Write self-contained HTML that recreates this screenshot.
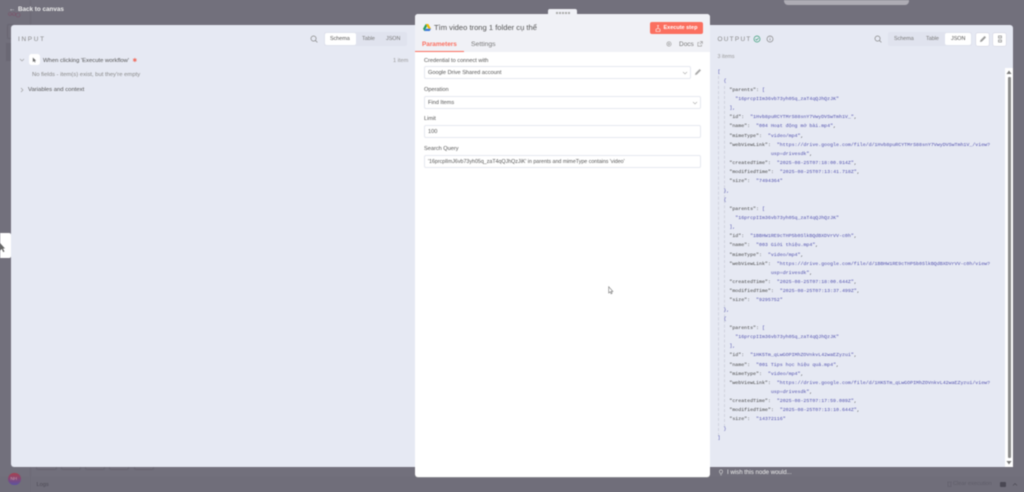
<!DOCTYPE html>
<html><head><meta charset="utf-8"><style>
html,body{margin:0;padding:0;width:1024px;height:492px;overflow:hidden;background:#72707c}
#r{position:relative;width:1024px;height:492px;overflow:hidden;filter:blur(.4px);font-family:"Liberation Sans","Noto Sans CJK SC",sans-serif}
#r div{position:absolute;white-space:nowrap}
.t{color:#555;font-size:5.9px;line-height:9px}
.f{background:#fff;border:.6px solid #e6e8ef;border-radius:2px;box-sizing:border-box;height:13.5px;left:424px;width:277px;font-size:5.6px;line-height:13px;color:#555;padding-left:3px}
#r .j{left:717.5px;font-family:"Liberation Mono","DejaVu Sans Mono",monospace;font-size:4.95px;line-height:9.15px;color:#444;white-space:pre}
.j b{font-weight:normal;color:#5050ad}
.g{background:#e0e3ee;border-radius:2px}
.b{background:#fff;border-radius:2px;box-shadow:0 0 0 .5px #ccd}
.o{top:466px;height:3px;border:.5px solid #686672;border-top:0;border-radius:0 0 2px 2px}
</style></head><body><div id="r">
<div style="left:0;top:477px;width:1024px;height:15px;background:#706e7a"></div>
<div style="left:30px;top:0;width:1px;height:492px;background:#6d6b77"></div>
<div style="left:784px;top:-4px;width:125px;height:9px;background:#aeacb4;border-radius:4px"></div>
<svg style="position:absolute;left:7px;top:10px" width="14" height="8" viewBox="0 0 14 8" fill="none" stroke="#7c5068" stroke-width=".6"><circle cx="3" cy="4" r="1.500"/><circle cx="7" cy="4" r="1.500"/><circle cx="11" cy="5" r="2"/></svg>
<div style="left:7px;top:24px;width:5px;height:13px;border:.5px solid #686672;border-radius:2px"></div>
<div style="left:6px;top:43px;width:6px;height:18px;background:#6a6874"></div>
<div class="o" style="left:36px;width:19px"></div>
<div class="o" style="left:61px;width:18px"></div>
<div class="o" style="left:85px;width:18px"></div>
<div class="o" style="left:109px;width:18px"></div>
<div class="o" style="left:134px;width:18px"></div>
<div style="left:9px;top:5px;color:#eee;font-size:6.400px;line-height:9px">←</div>
<div style="left:18px;top:5px;color:#eee;font-size:6.300px;font-weight:bold;line-height:9px">Back to canvas</div>

<div style="left:11px;top:25px;width:410px;height:441.500px;background:#e6e9f3;border-radius:3px"></div>
<div style="left:710px;top:25px;width:303px;height:441.500px;background:#e6e9f3;border-radius:0 3px 3px 0"></div>

<div style="left:18px;top:34.500px;color:#888;font-size:6.400px;letter-spacing:1.700px;line-height:9px">INPUT</div>
<svg style="position:absolute;left:310px;top:35px" width="8" height="8" viewBox="0 0 9 9" fill="none" stroke="#888" stroke-width=".8"><circle cx="4" cy="4" r="2.900"/><path d="M6 6l2.300 2.300"/></svg>
<div class="g" style="left:324px;top:32px;width:83px;height:14px"></div>
<div class="b" style="left:325px;top:33px;width:31px;height:12px;box-shadow:none"></div>
<div class="t" style="left:330px;top:34.500px;font-size:5.400px">Schema</div>
<div class="t" style="left:362px;top:34.500px;font-size:5.400px;color:#777">Table</div>
<div class="t" style="left:386px;top:34.500px;font-size:5.400px;color:#777">JSON</div>
<svg style="position:absolute;left:19px;top:57px" width="6" height="6" viewBox="0 0 6 6" fill="none" stroke="#999" stroke-width=".6"><path d="M1 2l2 2 2-2"/></svg>
<div style="left:29px;top:54px;width:10.500px;height:10.500px;background:#fff;border-radius:2.500px"></div>
<svg style="position:absolute;left:31.500px;top:56.500px" width="5" height="6" viewBox="0 0 6 7"><path d="M1 .5v5.500l1.400-1.300 1 1.800.8-.4-1-1.700h1.800z" fill="#666"/></svg>
<div class="t" style="left:43px;top:56.700px">When clicking 'Execute workflow'</div>
<div style="left:132.500px;top:56.500px;color:#f0695a;font-size:5.500px;line-height:8px">✱</div>
<div class="t" style="left:393px;top:56.700px;color:#999;font-size:5.600px">1 item</div>
<div class="t" style="left:32px;top:70.700px;color:#888">No fields - item(s) exist, but they're empty</div>
<svg style="position:absolute;left:19px;top:87px" width="6" height="6" viewBox="0 0 6 6" fill="none" stroke="#999" stroke-width=".6"><path d="M2 1l2 2-2 2"/></svg>
<div class="t" style="left:28px;top:86.200px">Variables and context</div>

<div style="left:0;top:233px;width:11px;height:25px;background:#fff;border-radius:0 2px 2px 0"></div>
<svg style="position:absolute;left:0;top:243px" width="6" height="11" viewBox="0 0 6 11"><path d="M0 0l5 5.500h-2l1.500 3-1.300.6L1.800 6 0 7.500z" fill="#666"/></svg>

<div style="left:548px;top:9px;width:29px;height:8px;background:#f0f1f6;border-radius:2px 2px 0 0"></div>
<div style="left:555.500px;top:12px;width:2px;height:3px;background:#aaa;box-shadow:3px 0 #aaa,6px 0 #aaa,9px 0 #aaa,12px 0 #aaa"></div>
<div style="left:414.700px;top:14px;width:295.300px;height:463px;background:#fff;border-radius:3px;box-shadow:0 .5px 0 #aaa"></div>
<div style="left:414.700px;top:14px;width:295.300px;height:37.500px;background:#f0f1f6;border-radius:3px 3px 0 0"></div>
<svg style="position:absolute;left:422.500px;top:23.500px" width="8" height="7.500" viewBox="0 0 8 7.500"><path d="M2.700 0h2.600L8 4.700H5.400z" fill="#f2b705"/><path d="M2.700 0L0 4.700l1.300 2.300L4 2.300z" fill="#2a9d5c"/><path d="M1.300 7h5.400L8 4.700H2.600z" fill="#3a78d8"/></svg>
<div style="left:434px;top:22px;color:#555;font-size:7.600px;line-height:11px">Tìm video trong 1 folder cụ thể</div>
<div style="left:649.500px;top:22px;width:53px;height:12px;background:#fb6f5f;border-radius:2px"></div>
<svg style="position:absolute;left:655px;top:24.500px" width="6" height="7" viewBox="0 0 6 7" fill="none" stroke="#fff" stroke-width=".6"><path d="M2 .5h2M3 .5v3M1 6.500h4V4.500a2 1 0 0 0-4 0z"/></svg>
<div style="left:663.500px;top:23.500px;color:#fff;font-size:5.500px;font-weight:bold;line-height:9px">Execute step</div>
<div style="left:422px;top:39.500px;color:#fb6f5f;font-size:6.400px;font-weight:bold;line-height:10px">Parameters</div>
<div style="left:415px;top:50.500px;width:49px;height:1.200px;background:#fb6f5f"></div>
<div style="left:471px;top:39.500px;color:#777;font-size:6.800px;line-height:10px">Settings</div>
<svg style="position:absolute;left:666px;top:40.500px" width="6" height="6" viewBox="0 0 7 7" fill="none" stroke="#999" stroke-width=".7"><circle cx="3.500" cy="3.500" r="2.500"/><circle cx="3.500" cy="3.500" r=".8"/></svg>
<div style="left:679px;top:39.500px;color:#777;font-size:6.500px;line-height:10px">Docs</div>
<svg style="position:absolute;left:696.500px;top:40.500px" width="6" height="6" viewBox="0 0 6 6" fill="none" stroke="#999" stroke-width=".6"><path d="M4.500 3.500V5.200H.8V1.500H2.500M3 .6h2.400V3M5.400.6L2.800 3.200"/></svg>

<div class="t" style="left:424px;top:57px;font-size:5.600px">Credential to connect with</div>
<div class="f" style="width:267px;top:65.500px">Google Drive Shared account</div>
<svg style="position:absolute;left:682px;top:69.500px" width="6" height="6" viewBox="0 0 6 6" fill="none" stroke="#aaa" stroke-width=".6"><path d="M1 2l2 2 2-2"/></svg>
<svg style="position:absolute;left:694px;top:67.500px" width="8" height="8" viewBox="0 0 8 8"><path d="M1 7l.4-1.800L5.600 1 7 2.400 2.800 6.600z" fill="#aaa"/></svg>
<div class="t" style="left:424px;top:85.500px;font-size:5.600px">Operation</div>
<div class="f" style="top:95.500px">Find Items</div>
<svg style="position:absolute;left:691.500px;top:99.500px" width="6" height="6" viewBox="0 0 6 6" fill="none" stroke="#aaa" stroke-width=".6"><path d="M1 2l2 2 2-2"/></svg>
<div class="t" style="left:424px;top:115px;font-size:5.600px">Limit</div>
<div class="f" style="top:124.500px">100</div>
<div class="t" style="left:424px;top:144.700px;font-size:5.600px">Search Query</div>
<div class="f" style="top:154.500px;font-size:5.300px">'16prcplImJ6vb73yh05q_zaT4qQJhQzJiK' in parents and mimeType contains 'video'</div>
<svg style="position:absolute;left:607.500px;top:285.500px" width="6" height="9" viewBox="0 0 6 9"><path d="M.7.700v6.300l1.400-1.200 1 2 1-.5-1-1.900h1.800z" fill="#fff" stroke="#777" stroke-width=".6"/></svg>

<div style="left:717.500px;top:34.500px;color:#888;font-size:6.400px;letter-spacing:1.300px;line-height:9px">OUTPUT</div>
<svg style="position:absolute;left:753px;top:35px" width="8" height="8" viewBox="0 0 8 8" fill="none" stroke="#3d9e7a" stroke-width=".7"><circle cx="4" cy="4" r="3"/><path d="M2.500 4l1.100 1.100L5.600 3"/></svg>
<svg style="position:absolute;left:765.500px;top:35px" width="8" height="8" viewBox="0 0 8 8" fill="none" stroke="#888" stroke-width=".7"><circle cx="4" cy="4" r="3"/><path d="M4 3.500v2M4 2.300v.6"/></svg>
<svg style="position:absolute;left:874px;top:35px" width="8" height="8" viewBox="0 0 9 9" fill="none" stroke="#888" stroke-width=".8"><circle cx="4" cy="4" r="2.900"/><path d="M6 6l2.300 2.300"/></svg>
<div class="g" style="left:888px;top:32px;width:84px;height:14px"></div>
<div class="b" style="left:945px;top:33px;width:26px;height:12px;box-shadow:none"></div>
<div class="t" style="left:894px;top:34.500px;font-size:5.400px;color:#777">Schema</div>
<div class="t" style="left:926px;top:34.500px;font-size:5.400px;color:#777">Table</div>
<div class="t" style="left:951px;top:34.500px;font-size:5.400px">JSON</div>
<div class="b" style="left:976px;top:32.500px;width:12.500px;height:13px"></div>
<svg style="position:absolute;left:978.500px;top:35px" width="8" height="8" viewBox="0 0 8 8"><path d="M1 7l.4-1.800L5.600 1 7 2.400 2.800 6.600z" fill="#999"/></svg>
<div class="b" style="left:993px;top:32.500px;width:12.500px;height:13px"></div>
<svg style="position:absolute;left:996.500px;top:35px" width="6" height="8" viewBox="0 0 6 8" fill="none" stroke="#888" stroke-width=".7"><path d="M1.500 1h3v2h-3zM1.500 5h3v2h-3z"/></svg>
<div class="t" style="left:717.500px;top:52.500px;color:#999;font-size:5.300px">3 items</div>

<div style="left:1005px;top:68px;width:8px;height:398.500px;background:#fff"></div>
<div style="left:1007.500px;top:77px;width:3.500px;height:381px;background:#8a8a8a;border-radius:1px"></div>
<svg style="position:absolute;left:1006px;top:70px" width="6" height="5" viewBox="0 0 6 5"><path d="M3 .5L5.500 4H.5z" fill="#777"/></svg>
<svg style="position:absolute;left:1006px;top:460px" width="6" height="5" viewBox="0 0 6 5"><path d="M3 4.500L5.500 1H.5z" fill="#777"/></svg>
<div style="left:718px;top:76px;width:0;height:360px;border-left:.5px dashed #d0d3de"></div>
<div style="left:723.500px;top:86px;width:0;height:341px;border-left:.5px dashed #d0d3de"></div>

<div class="j" style="top:67.500px"><b>[</b>
  <b>{</b>
    "parents": <b>[</b>
      <b>"16prcpIIm36vb73yh05q_zaT4qQJhQzJK"</b>
    <b>],</b>
    "id":  <b>"1Hvb8puRCYTMrS88snY7VwyDVSwTmh1V_"</b>,
    "name":  <b>"004 Hoạt động mở bài.mp4"</b>,
    "mimeType":  <b>"video/mp4"</b>,
    "webViewLink":  <b>"https://drive.google.com/file/d/1Hvb8puRCYTMrS88snY7VwyDVSwTmh1V_/view?</b>
                  <b>usp=drivesdk"</b>,
    "createdTime":  <b>"2025-08-25T07:18:00.914Z"</b>,
    "modifiedTime":  <b>"2025-08-25T07:13:41.718Z"</b>,
    "size":  <b>"7494364"</b>
  <b>},</b>
  <b>{</b>
    "parents": <b>[</b>
      <b>"16prcpIIm36vb73yh05q_zaT4qQJhQzJK"</b>
    <b>],</b>
    "id":  <b>"1BBHW1RE9cTHP5b0SlkBQdBXDVrVV-c0h"</b>,
    "name":  <b>"003 Giới thiệu.mp4"</b>,
    "mimeType":  <b>"video/mp4"</b>,
    "webViewLink":  <b>"https://drive.google.com/file/d/1BBHW1RE9cTHP5b0SlkBQdBXDVrVV-c0h/view?</b>
                  <b>usp=drivesdk"</b>,
    "createdTime":  <b>"2025-08-25T07:18:00.644Z"</b>,
    "modifiedTime":  <b>"2025-08-25T07:13:37.499Z"</b>,
    "size":  <b>"9295752"</b>
  <b>},</b>
  <b>{</b>
    "parents": <b>[</b>
      <b>"16prcpIIm36vb73yh05q_zaT4qQJhQzJK"</b>
    <b>],</b>
    "id":  <b>"1HK5Tm_qLwGOPIMhZOVnkvL42waEZyzui"</b>,
    "name":  <b>"001 Tips học hiệu quả.mp4"</b>,
    "mimeType":  <b>"video/mp4"</b>,
    "webViewLink":  <b>"https://drive.google.com/file/d/1HK5Tm_qLwGOPIMhZOVnkvL42waEZyzui/view?</b>
                  <b>usp=drivesdk"</b>,
    "createdTime":  <b>"2025-08-25T07:17:59.089Z"</b>,
    "modifiedTime":  <b>"2025-08-25T07:13:10.644Z"</b>,
    "size":  <b>"14372116"</b>
  <b>}</b>
<b>]</b></div>

<svg style="position:absolute;left:717.500px;top:468.500px" width="6" height="7" viewBox="0 0 6 7" fill="none" stroke="#ddd" stroke-width=".6"><path d="M1.500 3a1.600 1.600 0 1 1 3 0L3.800 4.500H2.200zM2.300 5.800h1.400"/></svg>
<div style="left:727px;top:468px;color:#eee;font-size:6.100px;line-height:9px">I wish this node would...</div>

<div style="left:8px;top:472.500px;width:12.500px;height:12.500px;border-radius:50%;background:linear-gradient(#a8404f,#5c52a0)"></div>
<div style="left:10.500px;top:475.500px;color:#c9a0a8;font-size:4.500px;line-height:6px">NH</div>
<div style="left:36.500px;top:480.500px;color:#4d4b56;font-size:5.600px;line-height:9px">Logs</div>
<svg style="position:absolute;left:947px;top:481px" width="5" height="6" viewBox="0 0 5 6" fill="none" stroke="#5f5d69" stroke-width=".6"><path d="M.5 1h4M1 1v4.500h3V1"/></svg>
<div style="left:953px;top:480px;color:#5f5d69;font-size:5.600px;line-height:9px">Clear execution</div>
<div style="left:1000px;top:481.500px;width:5.500px;height:5.500px;background:#4a4853;border-radius:1px"></div>
<svg style="position:absolute;left:1012px;top:482px" width="6" height="5" viewBox="0 0 6 5" fill="none" stroke="#4d4b56" stroke-width=".7"><path d="M1 3.500l2-2 2 2"/></svg>
</div></body></html>
